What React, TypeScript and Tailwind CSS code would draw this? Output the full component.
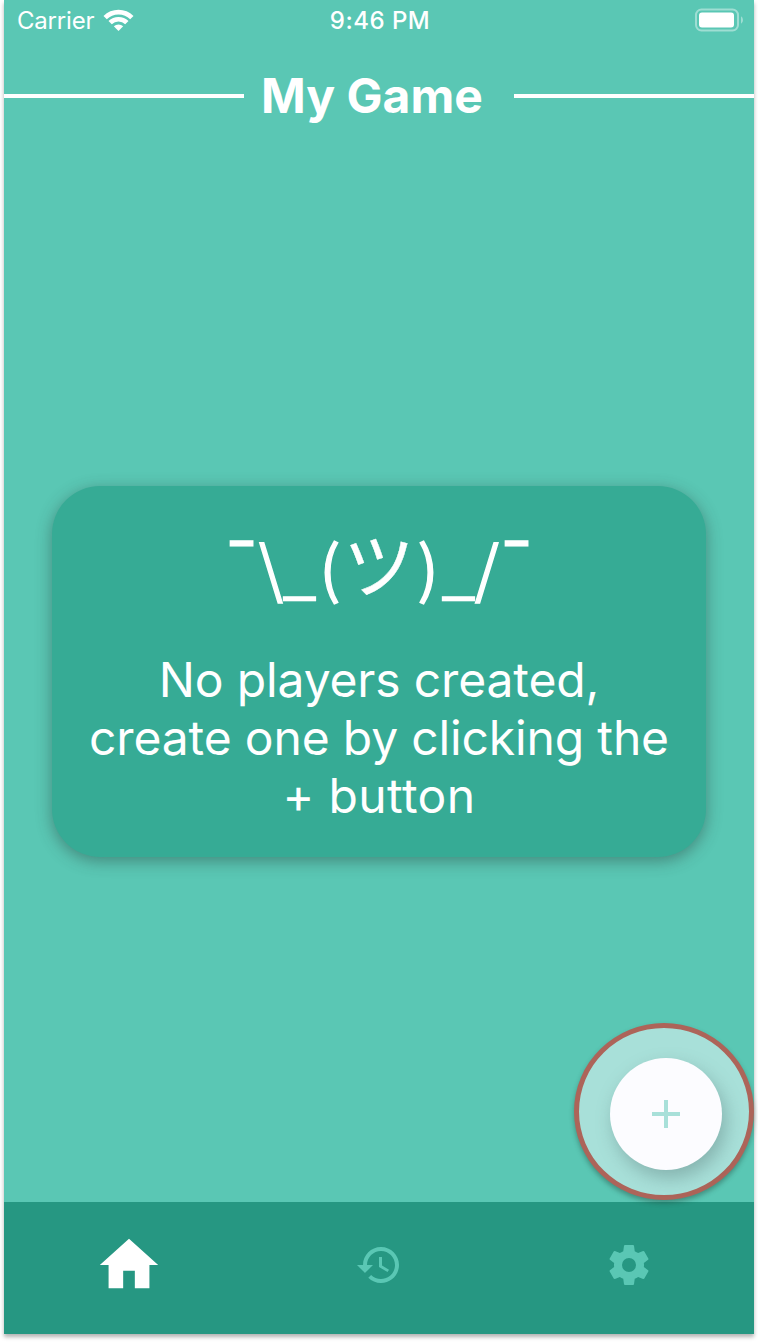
import React from "react";

const face: { ch: string; cls: string }[] = [
  { ch: "¯", cls: "w-[34px] text-[76px] translate-y-[5px]" },
  { ch: "\\", cls: "w-[25px] text-[62px]" },
  { ch: "_", cls: "w-[32px] text-[60px]" },
  { ch: "(", cls: "w-[29px] text-[62px]" },
  { ch: "ツ", cls: "w-[69px] text-[71px] [-webkit-text-stroke:0.4px_white]" },
  { ch: ")", cls: "w-[29px] text-[62px]" },
  { ch: "_", cls: "w-[32px] text-[60px]" },
  { ch: "/", cls: "w-[25px] text-[62px]" },
  { ch: "¯", cls: "w-[34px] text-[76px] translate-y-[5px]" },
];

function StatusBar() {
  return (
    <div className="flex h-10 items-center justify-between pl-[13px] pr-[11px] text-[24px] leading-[40px]">
      <div className="flex flex-1 items-center gap-[9px]">
        <span className="pt-[2px] tracking-[-0.2px]">Carrier</span>
        <svg width="31" height="24" viewBox="0 0 31 24" fill="#fff">
          <path d="M.5 8A21 21 0 0 1 30.5 8L27.2 11.3A16.6 16.6 0 0 0 3.8 11.3Z" />
          <path d="M5.5 13A14.4 14.4 0 0 1 25.5 13L22.2 16.3A9.7 9.7 0 0 0 8.8 16.3Z" />
          <path d="M10.8 18.2A7 7 0 0 1 20.2 18.2L15.5 23Z" />
        </svg>
      </div>
      <span className="pt-[2px] font-medium tracking-[0.5px]">9:46 PM</span>
      <div className="flex flex-1 justify-end">
        <svg width="49" height="24" viewBox="0 0 49 24">
          <rect x="2" y="1.5" width="42" height="21" rx="5.5" fill="none" stroke="#fff" strokeOpacity=".42" strokeWidth="2" />
          <rect x="5" y="4.5" width="35" height="15" rx="3" fill="#fff" />
          <path d="M47 8.2Q49 9.2 49 12T47 15.8Z" fill="#fff" fillOpacity=".42" />
        </svg>
      </div>
    </div>
  );
}

export default function App() {
  return (
    <div className="h-[1342px] w-[758px] overflow-hidden bg-white px-1 pb-2 font-['Inter','Liberation_Sans',sans-serif] text-white">
      <div className="relative flex h-[1334px] flex-col bg-[#5ac7b4] shadow-[0_3px_4px_rgba(0,0,0,0.3)]">
        <StatusBar />
        <header className="flex h-[112px] items-center justify-between">
          <div className="h-1 w-60 bg-white" />
          <h1 className="-ml-[14px] whitespace-nowrap text-[48px] font-bold leading-[58px]">My Game</h1>
          <div className="h-1 w-60 bg-white" />
        </header>

        <main className="flex flex-1 flex-col pt-[334px]">
          <section className="mx-12 flex h-[371px] flex-col items-center rounded-[48px] bg-[#36ab95] pt-[31px] shadow-[0_4px_16px_rgba(40,60,55,0.45)]">
            <div className="flex h-[84px] items-baseline justify-center font-['Noto_Sans_CJK_JP',sans-serif] leading-[84px] [-webkit-text-stroke:1.3px_white]">
              {face.map((f, i) => (
                <span key={i} className={`flex justify-center ${f.cls}`}>{f.ch}</span>
              ))}
            </div>
            <p className="mt-[50px] whitespace-nowrap text-center text-[48px] leading-[58px] tracking-[-0.15px]">
              No players created,<br />create one by clicking the<br /><span className="tracking-[0.4px]">+ button</span>
            </p>
          </section>
        </main>

        <nav className="grid h-[132px] grid-cols-3 place-items-center bg-[#269782] pb-[6px]">
          <svg width="70" height="70" viewBox="0 0 24 24" fill="#fff">
            <path d="M10 20v-6h4v6h5v-8h3L12 3 2 12h3v8z" />
          </svg>
          <svg width="48" height="48" viewBox="0 0 24 24" fill="#5ac7b4">
            <path d="M13 3c-4.97 0-9 4.03-9 9H1l3.89 3.89.07.14L9 12H6c0-3.87 3.13-7 7-7s7 3.13 7 7-3.13 7-7 7c-1.93 0-3.68-.79-4.94-2.06l-1.42 1.42C8.27 19.99 10.51 21 13 21c4.97 0 9-4.03 9-9s-4.03-9-9-9zm-1 5v5l4.28 2.54.72-1.21-3.5-2.08V8H12z" />
          </svg>
          <svg width="48" height="48" viewBox="0 0 24 24" fill="#5ac7b4">
            <path d="M12 15.5A3.5 3.5 0 0 1 8.5 12 3.5 3.5 0 0 1 12 8.5a3.5 3.5 0 0 1 3.5 3.5 3.5 3.5 0 0 1-3.5 3.5m7.43-2.53c.04-.32.07-.64.07-.97s-.03-.66-.07-1l2.11-1.63c.19-.15.24-.42.12-.64l-2-3.46c-.12-.22-.39-.31-.61-.22l-2.49 1c-.52-.39-1.06-.73-1.69-.98l-.37-2.65A.506.506 0 0 0 14 2h-4c-.25 0-.46.18-.5.42l-.37 2.65c-.63.25-1.17.59-1.69.98l-2.49-1c-.22-.09-.49 0-.61.22l-2 3.46c-.13.22-.07.49.12.64L4.57 11c-.04.34-.07.67-.07 1s.03.65.07.97l-2.11 1.66c-.19.15-.25.42-.12.64l2 3.46c.12.22.39.3.61.22l2.49-1.01c.52.4 1.06.74 1.69.99l.37 2.65c.04.24.25.42.5.42h4c.25 0 .46-.18.5-.42l.37-2.65c.63-.26 1.17-.59 1.69-.99l2.49 1.01c.22.08.49 0 .61-.22l2-3.46c.12-.22.07-.49-.12-.64z" />
          </svg>
        </nav>

        <div className="absolute right-0 top-[1023px] h-[177px] w-[180px] rounded-[50%] border-[5px] border-[#ad6459] bg-[#a8e0d9] shadow-[0_3px_5px_rgba(30,60,50,0.4)]">
          <button className="ml-[31px] mt-[30px] flex size-28 items-center justify-center rounded-full bg-[#fcfcff] shadow-[4px_8px_18px_rgba(80,110,110,0.4)]">
            <svg width="28" height="28" viewBox="0 0 28 28" fill="#a8e0d9">
              <path d="M12 0h4v12h12v4H16v12h-4V16H0v-4h12z" />
            </svg>
          </button>
        </div>
      </div>
    </div>
  );
}
